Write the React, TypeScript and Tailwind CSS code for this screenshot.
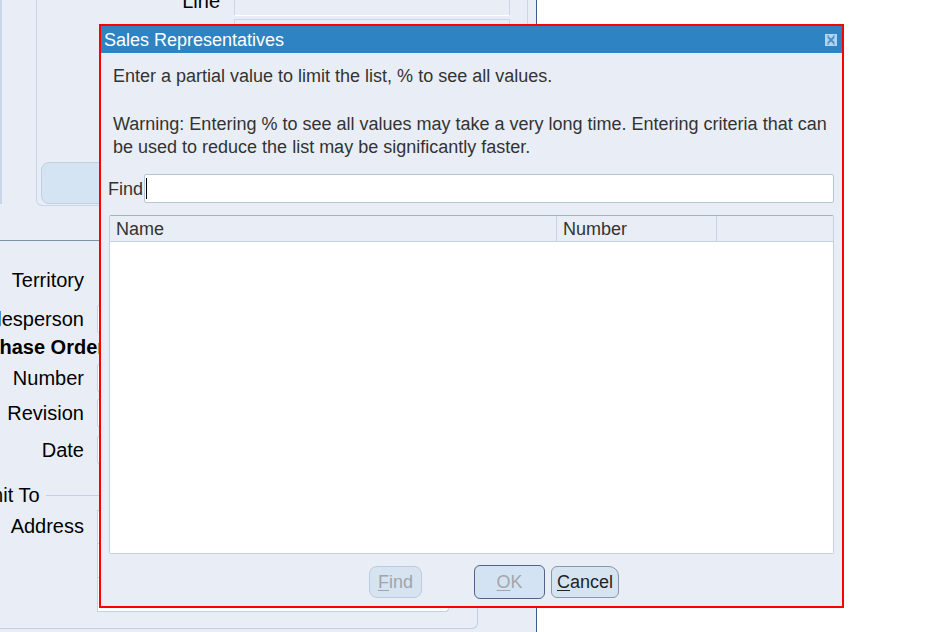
import React from "react";

const labelCls = "w-[84px] shrink-0 flex justify-end whitespace-nowrap text-[20px] leading-[28px] text-black";
const fieldCls = "ml-[13px] w-[400px] h-[28px] bg-white border border-[#c2d1e4] rounded-[2px]";

function FormRow({ label, mt }: { label: string; mt: string }) {
  return (
    <div className={`flex items-center h-[28px] ${mt}`}>
      <span className={labelCls}>
        <span>{label}</span>
      </span>
      <div className={fieldCls} />
    </div>
  );
}

function FormBackground() {
  return (
    <div className="w-[537px] h-full shrink-0 bg-[#e9eef6] border-r border-[#3d5b8a] flex flex-col">
      {/* top block with Line fields */}
      <div className="h-[206px] flex shrink-0">
        <div className="w-[36px] h-[204px] border-l-2 border-[#c8d6e8]" />
        <div className="w-[492px] h-[206px] border-l border-b border-r border-[#c8d6e8] rounded-bl-[6px] flex flex-col">
          <div className="flex -mt-[11px]">
            <span className="w-[183px] text-right text-[20px] leading-[24px] text-black">Line</span>
            <div className="ml-[14px] mt-[9px] flex flex-col">
              <div className="w-[276px] h-[18px] border border-[#c8d6e8] border-b-white" />
              <div className="mt-[3px] w-[276px] h-[30px] border border-[#c8d6e8]" />
            </div>
          </div>
          <div className="mt-auto ml-[4px] mb-[1px] w-[220px] h-[42px] rounded-[8px] bg-[#d5e4f3] border border-[#bed0e6]" />
        </div>
      </div>

      <div className="mt-[34px] h-px bg-[#7c90a8] shrink-0" />

      <div className="flex items-center h-[28px] mt-[25px]">
        <span className={labelCls}>
          <span>Territory</span>
        </span>
      </div>
      <FormRow label="Salesperson" mt="mt-[11px]" />
      <div className="h-[20px] mt-[4px] flex items-center">
        <span className="-ml-[45px] whitespace-nowrap font-bold text-[20px] leading-[20px] text-black">Purchase Order</span>
      </div>
      <FormRow label="Number" mt="mt-[7px]" />
      <FormRow label="Revision" mt="mt-[7px]" />
      <FormRow label="Date" mt="mt-[9px]" />

      {/* remit to fieldset */}
      <div className="mt-[21px] w-[478px] h-[144px] border-r border-b border-[#c2d1e4] rounded-br-[6px] flex flex-col shrink-0">
        <div className="h-[20px] flex items-center">
          <span className="-ml-[39px] whitespace-nowrap text-[20px] leading-[20px] text-black">Remit To</span>
          <div className="ml-[6px] flex-1 h-px bg-[#c2d1e4]" />
        </div>
        <div className="mt-[5px] flex items-start">
          <span className={`${labelCls} mt-[2px]`}>
            <span>Address</span>
          </span>
          <div className="ml-[13px] w-[352px] flex flex-col">
            <div className="h-[34px] bg-white border border-[#c2d1e4]" />
            <div className="h-[34px] bg-white border border-t-0 border-[#c2d1e4]" />
            <div className="h-[34px] bg-white border border-t-0 border-[#c2d1e4] rounded-br-[4px]" />
          </div>
        </div>
      </div>
    </div>
  );
}

function CloseBox() {
  return (
    <svg width="12" height="12" viewBox="0 0 12 12">
      <rect x="0" y="0" width="12" height="12" fill="#b3d4f0" />
      <path d="M3 3 L9 9 M9 3 L3 9" stroke="#4a8fcf" strokeWidth="2" />
      <path d="M2 2 h2 M8 2 h2 M2 10 h2 M8 10 h2" stroke="#4a8fcf" strokeWidth="1" />
    </svg>
  );
}

function LovDialog() {
  return (
    <div className="absolute left-[99px] top-[24px] w-[745px] h-[584px] border-2 border-[#ff0000] bg-[#e9eef6] flex flex-col">
      <div className="h-[27px] shrink-0 bg-[#2e83c3] flex items-center justify-between pl-[3px] pr-[5px]">
        <span className="text-white text-[18px] leading-[20px]">Sales Representatives</span>
        <CloseBox />
      </div>

      <div className="pl-[12px] pt-[12px] text-[18px] leading-[23px] text-[#333]">
        <p>Enter a partial value to limit the list, % to see all values.</p>
        <p className="mt-[25px]">
          Warning: Entering % to see all values may take a very long time. Entering criteria that can
          <br />
          be used to reduce the list may be significantly faster.
        </p>
      </div>

      <div className="pl-[7px] pr-[8px] flex flex-col">
        <div className="mt-[15px] h-[29px] flex items-center">
          <span className="text-[18px] leading-[20px] text-[#333]">Find</span>
          <div className="ml-[1px] flex-1 h-[29px] bg-white border border-[#b6c6da] rounded-[2px] flex items-center">
            <span className="ml-[1px] w-px h-[21px] bg-black" />
          </div>
        </div>

        <div className="mt-[12px] ml-[1px] h-[339px] bg-white border border-[#c2d0e2] border-t-[#a6b0be] rounded-[2px] flex flex-col">
          <div className="h-[26px] bg-[#e9eef6] border-b border-[#c5d3e5] flex text-[18px] leading-[20px] text-[#333]">
            <div className="w-[447px] pl-[6px] flex items-center border-r border-[#c8d4e4]">Name</div>
            <div className="w-[160px] pl-[6px] flex items-center border-r border-[#c8d4e4]">Number</div>
            <div className="flex-1" />
          </div>
        </div>
      </div>

      <div className="mt-[11px] h-[34px] pl-[268px] flex items-center text-[18px]">
        <button className="w-[53px] h-[32px] rounded-[8px] bg-[#d6e4f2] border border-[#bccbdd] text-[#a0a4aa]">
          <span className="underline underline-offset-2">F</span>ind
        </button>
        <button className="ml-[52px] w-[71px] h-[34px] rounded-[6px] bg-[#d3e3f3] border-[1.5px] border-[#4f6488] text-[#a3a6ab]">
          <span className="underline underline-offset-2">O</span>K
        </button>
        <button className="ml-[6px] w-[68px] h-[32px] rounded-[6px] rounded-tr-[10px] bg-[#d6e4f2] border border-[#8797ad] text-[#222]">
          <span className="underline underline-offset-2">C</span>ancel
        </button>
      </div>
    </div>
  );
}

export default function App() {
  return (
    <div className="relative w-[943px] h-[632px] overflow-hidden bg-white flex font-['Liberation_Sans',Arial,sans-serif]">
      <FormBackground />
      <div className="flex-1 bg-white" />
      <LovDialog />
    </div>
  );
}
